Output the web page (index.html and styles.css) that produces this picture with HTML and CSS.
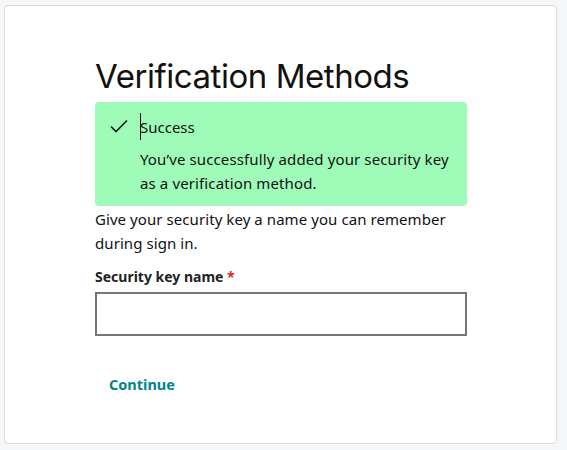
FILE: index.html
```html
<!DOCTYPE html>
<html lang="en">
<head>
<meta charset="utf-8">
<title>Verification Methods</title>
<link rel="stylesheet" href="styles.css">
</head>
<body>
<div class="card">
  <div class="content">
    <h1 class="title">Verification Methods</h1>
    <div class="alert">
      <svg class="check" width="18" height="14" viewBox="0 0 18 14"><path d="M1 7.5 L6 12.5 L17 1.5" fill="none" stroke="#1a1a1a" stroke-width="1.6"/></svg>
      <div class="alert-body">
        <div class="alert-title"><span class="caret"></span>Success</div>
        <p class="alert-text">You’ve successfully added your security key as a verification method.</p>
      </div>
    </div>
    <p class="intro">Give your security key a name you can remember during sign in.</p>
    <label class="label" for="keyname">Security key name <span class="req">*</span></label>
    <input class="input" id="keyname" type="text">
    <button class="btn" type="button">Continue</button>
  </div>
</div>
</body>
</html>
```

FILE: styles.css
```css
html, body {
  margin: 0;
  padding: 0;
}
body {
  background: #f5f7f8;
  font-family: "Noto Sans", "Liberation Sans", sans-serif;
  color: #111;
  padding: 5px 10px 6px 4px;
}
.card {
  background: #fff;
  border: 1px solid #d6dce1;
  border-radius: 4px;
  box-sizing: border-box;
  height: 439px;
  width: 553px;
}
.content {
  width: 372px;
  margin-left: 90px;
  padding-top: 45px;
}
.title {
  margin: 0;
  font-family: "Inter", sans-serif;
  font-weight: 400;
  font-size: 33px;
  line-height: 51px;
  letter-spacing: -0.45px;
  color: #111;
}
.alert {
  margin-top: 0;
  background: #9ffcb8;
  border-radius: 4px;
  display: flex;
  padding: 14px 14px 11px 15px;
  gap: 12px;
}
.check {
  margin-top: 3px;
  flex: none;
}
.alert-body {
  flex: 1;
}
.alert-title {
  font-size: 15px;
  line-height: 22px;
  position: relative;
}
.caret {
  position: absolute;
  left: 0;
  top: -3px;
  width: 1px;
  height: 27px;
  background: #111;
}
.alert-text {
  margin: 9px 0 0;
  font-size: 15px;
  line-height: 24px;
  letter-spacing: 0.12px;
}
.intro {
  margin: 1px 0 0;
  font-size: 15px;
  line-height: 24px;
  letter-spacing: 0.07px;
}
.label {
  display: block;
  margin-top: 12px;
  font-size: 14px;
  font-weight: 700;
  line-height: 20px;
  color: #222;
}
.req {
  color: #d62b1f;
}
.input {
  display: block;
  box-sizing: border-box;
  width: 372px;
  height: 44px;
  margin-top: 5px;
  border: 2px solid #767676;
  border-radius: 0;
  background: #fff;
  outline: none;
  font: inherit;
}
.btn {
  display: block;
  margin-top: 36px;
  padding: 0 14px;
  background: none;
  border: none;
  font-family: inherit;
  font-size: 14.5px;
  font-weight: 700;
  color: #00838c;
  line-height: 24px;
  cursor: pointer;
}
```
